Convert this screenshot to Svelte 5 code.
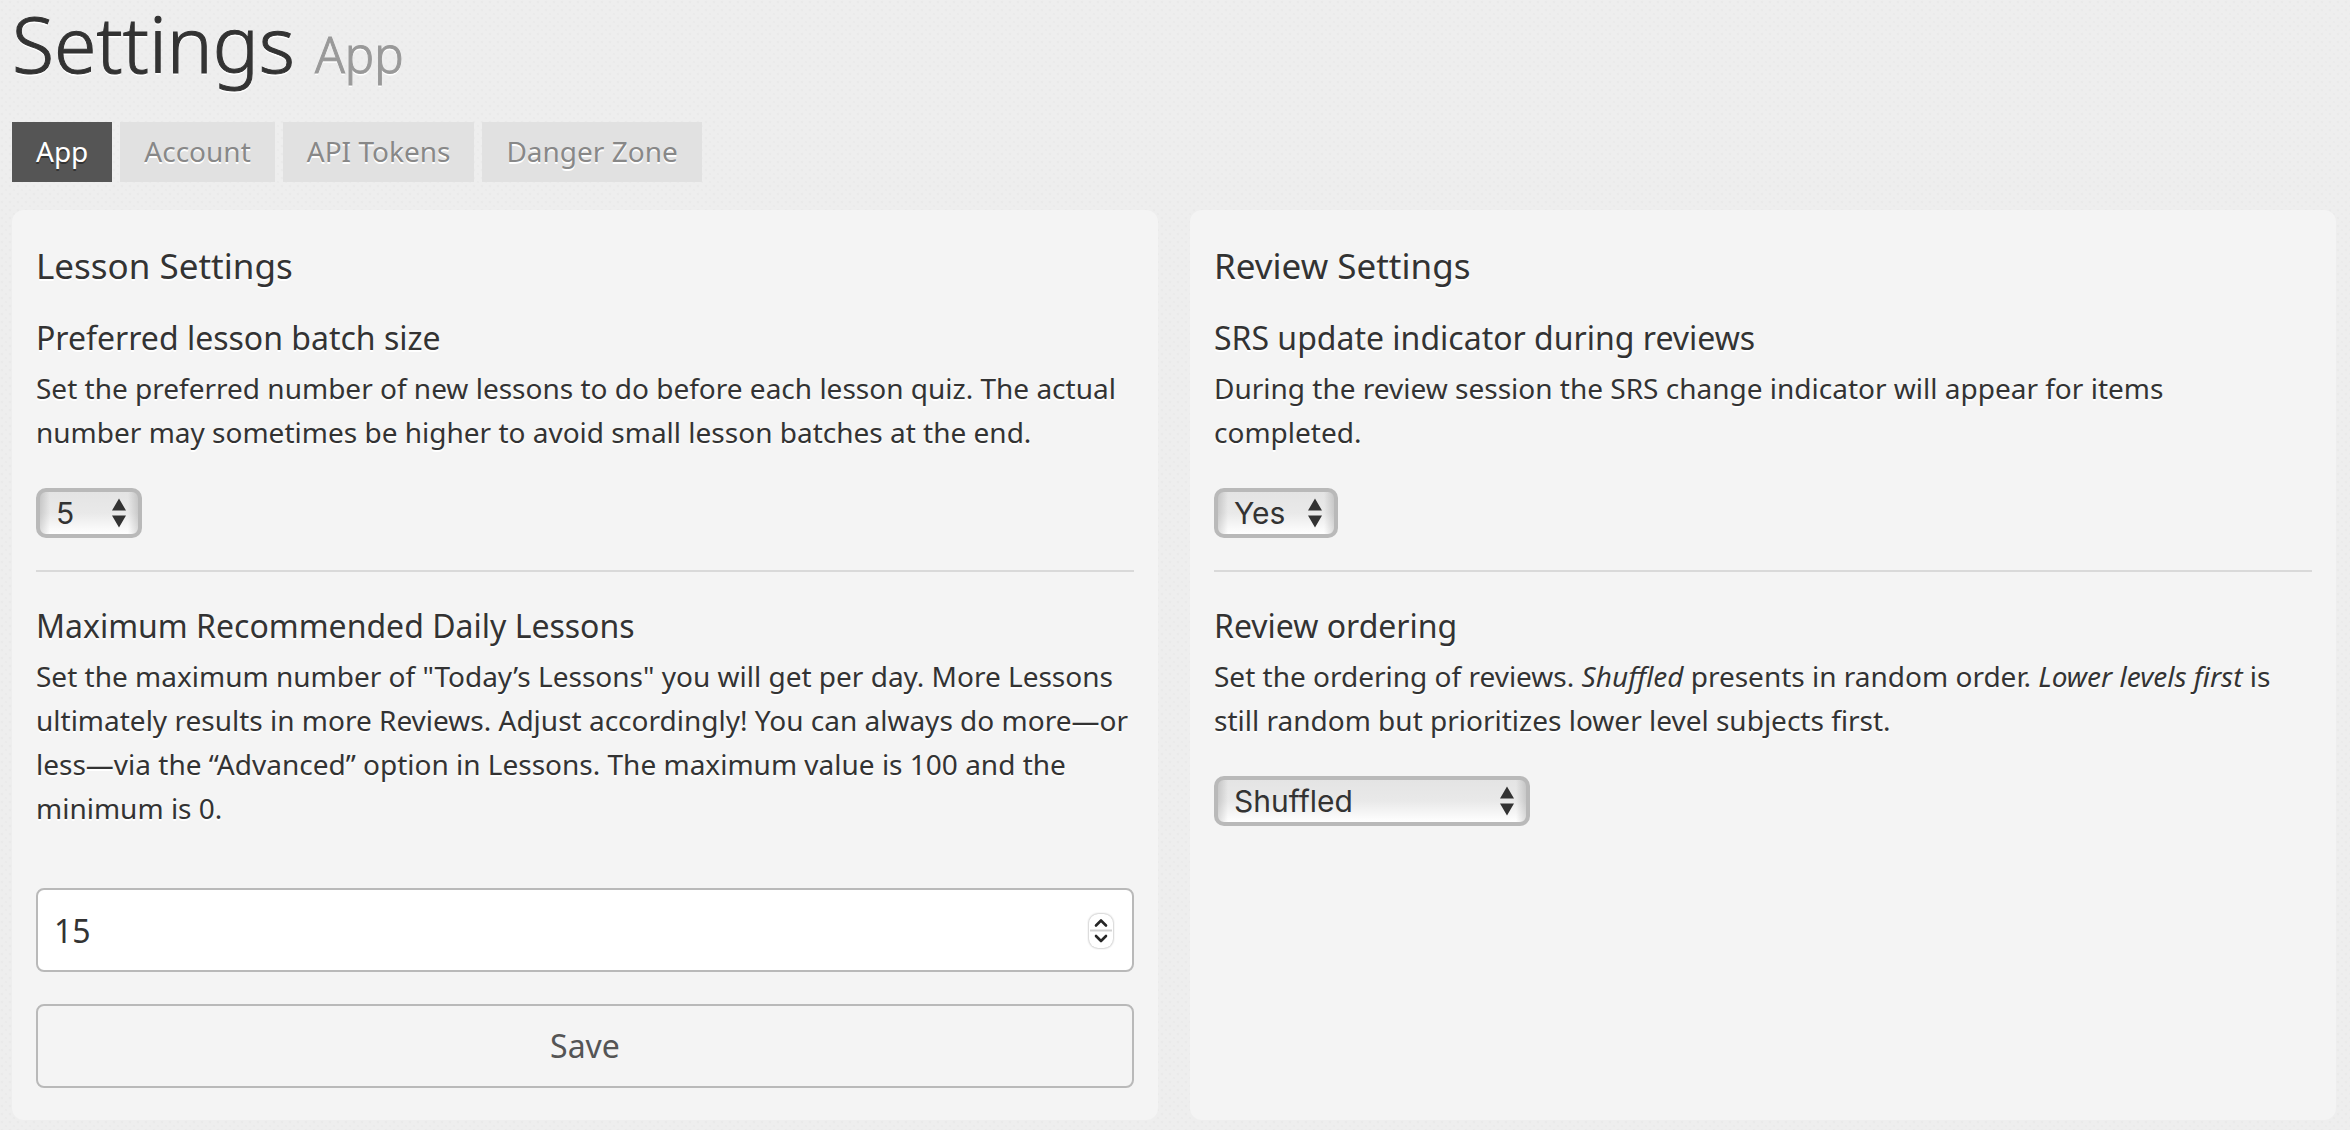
<script>
  const tabs = ['App', 'Account', 'API Tokens', 'Danger Zone'];
  let current = $state('App');
  let batchSize = $state('5');
  let dailyLessons = $state(15);
  let indicator = $state('Yes');
  let ordering = $state('Shuffled');
</script>

{#snippet arrows()}
  <svg class="arrows" viewBox="0 0 14 30" aria-hidden="true">
    <path d="M7 0.5 14 12.5H0zM7 29.5 14 17.5H0z" fill="#333" />
  </svg>
{/snippet}

<main>
  <h1>Settings <small>App</small></h1>

  <nav>
    {#each tabs as tab}
      <a href="#{tab}" class:active={tab === current} onclick={() => (current = tab)}>{tab}</a>
    {/each}
  </nav>

  <div class="panels">
    <section class="panel">
      <h2>Lesson Settings</h2>

      <div class="setting">
        <h3><label for="batch">Preferred lesson batch size</label></h3>
        <p>Set the preferred number of new lessons to do before each lesson quiz. The actual number may sometimes be higher to avoid small lesson batches at the end.</p>
        <span class="select short">
          <select id="batch" bind:value={batchSize}>
            {#each ['3', '4', '5', '6', '7', '8', '9', '10'] as n}<option>{n}</option>{/each}
          </select>
          {@render arrows()}
        </span>
      </div>

      <form class="setting" onsubmit={(e) => e.preventDefault()}>
        <h3><label for="daily">Maximum Recommended Daily Lessons</label></h3>
        <p>Set the maximum number of "Today’s Lessons" you will get per day. More Lessons ultimately results in more Reviews. Adjust accordingly! You can always do more—or less—via the “Advanced” option in Lessons. The maximum value is 100 and the minimum is 0.</p>
        <div class="number">
          <input id="daily" type="number" min="0" max="100" bind:value={dailyLessons} />
          <svg class="spinner" viewBox="0 0 28 38" aria-hidden="true">
            <rect x="2" y="2" width="24" height="34" rx="9" fill="#fff" />
            <path d="M3 18.5H25" stroke="#d2d2d2" stroke-width="2" />
            <path d="M9 13.5 14 8.5 19 13.5M9 24 14 29 19 24" fill="none" stroke="#262626" stroke-width="2.6" stroke-linecap="round" stroke-linejoin="round" />
          </svg>
        </div>
        <button type="submit">Save</button>
      </form>
    </section>

    <section class="panel">
      <h2>Review Settings</h2>

      <div class="setting">
        <h3><label for="indicator">SRS update indicator during reviews</label></h3>
        <p>During the review session the SRS change indicator will appear for items completed.</p>
        <span class="select medium">
          <select id="indicator" bind:value={indicator}>
            <option>Yes</option>
            <option>No</option>
          </select>
          {@render arrows()}
        </span>
      </div>

      <div class="setting">
        <h3><label for="ordering">Review ordering</label></h3>
        <p>Set the ordering of reviews. <em>Shuffled</em> presents in random order. <em>Lower levels first</em> is still random but prioritizes lower level subjects first.</p>
        <span class="select long">
          <select id="ordering" bind:value={ordering}>
            <option>Shuffled</option>
            <option>Lower levels first</option>
          </select>
          {@render arrows()}
        </span>
      </div>
    </section>
  </div>
</main>

<style>
  :global(body) {
    background-color: #eeeeee;
    background-image:
      radial-gradient(circle at 2px 2px, #e7e7e7 0, transparent 2px),
      radial-gradient(circle at 6px 6px, #e9e9e9 0, transparent 2px);
    background-size: 8px 8px;
  }

  main {
    padding: 0 14px 10px 12px;
    font: 28px/44px 'Noto Sans', sans-serif;
    color: #333;
    text-shadow: 0 2px 0 #fff;
  }

  h1,
  h2,
  h3,
  p {
    margin: 0;
    font-weight: 400;
  }

  h1 {
    padding: 4px 0 38px;
    font-size: 77px;
    font-weight: 300;
    line-height: 80px;
    -webkit-text-stroke: 1px currentColor;
  }

  small {
    font-size: 49px;
    line-height: 49px;
    color: #999;
  }

  nav {
    display: flex;
    gap: 8px;
    margin-bottom: 28px;
  }

  nav a {
    padding: 7px 24px 9px;
    background: #e1e1e1;
    color: #888;
    text-decoration: none;
  }

  nav a.active {
    background: #555;
    color: #fff;
    text-shadow: 0 2px 0 #333;
  }

  .panels {
    display: grid;
    grid-template-columns: 1fr 1fr;
    gap: 32px;
  }

  .panel {
    padding: 32px 24px;
    border-radius: 12px;
    background: #f4f4f4;
  }

  h2 {
    margin-bottom: 26px;
    font-size: 35px;
    line-height: 48px;
  }

  h3 {
    margin-bottom: 6px;
    font-size: 32px;
    line-height: 44px;
  }

  .setting + .setting {
    margin-top: 32px;
    padding-top: 32px;
    border-top: 2px solid #d9d9d9;
  }

  .select {
    position: relative;
    display: block;
    margin-top: 34px;
  }

  .short {
    width: 106px;
  }

  .medium {
    width: 124px;
  }

  .long {
    width: 316px;
  }

  select {
    appearance: none;
    display: block;
    width: 100%;
    height: 50px;
    padding: 0 16px;
    border: 4px solid #b9b9b9;
    border-radius: 10px;
    background:
      linear-gradient(90deg, #0002, transparent 10px, transparent calc(100% - 10px), #0002),
      linear-gradient(#e4e4e4, #e9e9e9 50%, #fff);
    color: #333;
    font: 400 30px/40px Inter, sans-serif;
  }

  .arrows {
    position: absolute;
    top: 10px;
    right: 16px;
    width: 14px;
    height: 30px;
    pointer-events: none;
  }

  .number {
    position: relative;
    margin: 58px 0 32px;
  }

  input,
  button {
    box-sizing: border-box;
    display: block;
    width: 100%;
    height: 84px;
    border: 2px solid #b9b9b9;
    border-radius: 8px;
    font: 32px/44px 'Noto Sans', sans-serif;
  }

  input {
    appearance: textfield;
    padding: 0 16px;
    background: #fff;
    color: #333;
  }

  input::-webkit-inner-spin-button {
    appearance: none;
    margin: 0;
  }

  .spinner {
    position: absolute;
    top: 24px;
    right: 19px;
    width: 28px;
    height: 38px;
    filter: drop-shadow(0 0 1px #999);
    pointer-events: none;
  }

  button {
    background: transparent;
    color: #555;
  }
</style>
